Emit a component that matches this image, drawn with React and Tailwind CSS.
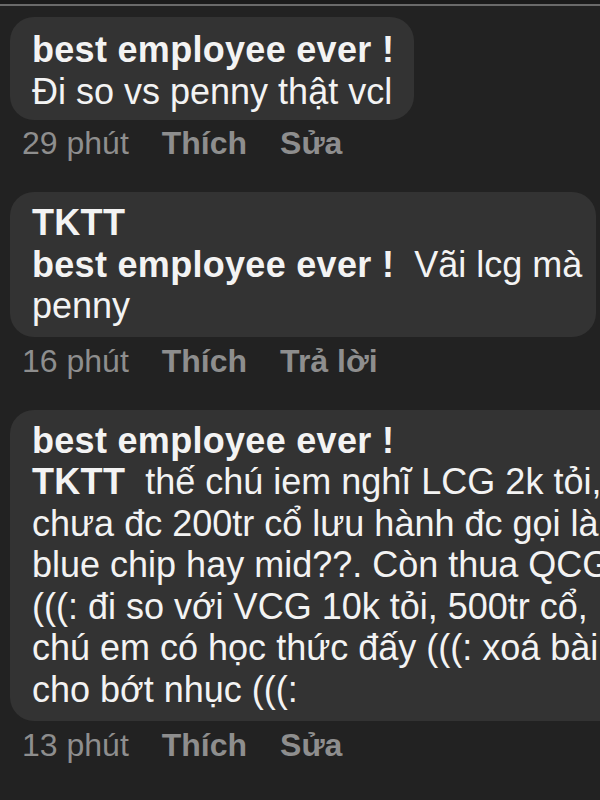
export default function App() {
  const font = { fontFamily: '"Liberation Sans", Arial, sans-serif' };
  const Meta = ({ time, action, className }) => (
    <div className={"flex h-[36px] items-center gap-[33px] pl-[12px] text-[32px] leading-[36px] text-[#8e8e8e] " + className}>
      <span>{time}</span>
      <span className="font-bold">Thích</span>
      <span className="font-bold">{action}</span>
    </div>
  );
  return (
    <div className="h-[800px] w-[600px] overflow-hidden bg-[#222222]" style={font}>
      <div className="h-[4px] bg-[#1b1b1b]" />
      <div className="h-[2px] bg-[#6a6a6a]" />
      <div className="pl-[10px] pt-[11px]">
        {/* Comment 1 */}
        <div className="w-fit rounded-[24px] bg-[#333333] pb-[8px] pl-[22px] pr-[20px] pt-[12px] text-[36px] leading-[41.5px] text-[#f3f3f3]">
          <div className="font-bold tracking-[0.3px]">best employee ever !</div>
          <div>Đi so vs penny thật vcl</div>
        </div>
        <Meta time="29 phút" action="Sửa" className="mt-[5px]" />

        {/* Comment 2 */}
        <div className="mt-[31px] w-[586px] rounded-[24px] bg-[#333333] pb-[10px] pl-[22px] pr-[18px] pt-[10px] text-[36px] leading-[41.5px] text-[#f3f3f3]">
          <div className="font-bold tracking-[0.3px]">TKTT</div>
          <div className="whitespace-pre">
            <span className="font-bold tracking-[0.3px]">best employee ever !</span>
            {"  Vãi lcg mà"}
          </div>
          <div>penny</div>
        </div>
        <Meta time="16 phút" action="Trả lời" className="mt-[6px]" />

        {/* Comment 3 */}
        <div className="mt-[31px] w-[720px] whitespace-pre rounded-[24px] bg-[#333333] pb-[11px] pl-[22px] pr-[18px] pt-[10px] text-[36px] leading-[41.5px] text-[#f3f3f3]">
          <div className="font-bold tracking-[0.3px]">best employee ever !</div>
          <div>
            <span className="font-bold tracking-[0.3px]">TKTT</span>
            {"  thế chú iem nghĩ LCG 2k tỏi,"}
          </div>
          <div>chưa đc 200tr cổ lưu hành đc gọi là</div>
          <div>blue chip hay mid??. Còn thua QCG</div>
          <div>(((: đi so với VCG 10k tỏi, 500tr cổ,</div>
          <div>chú em có học thức đấy (((: xoá bài</div>
          <div>cho bớt nhục (((:</div>
        </div>
        <Meta time="13 phút" action="Sửa" className="mt-[6px]" />
      </div>
    </div>
  );
}
